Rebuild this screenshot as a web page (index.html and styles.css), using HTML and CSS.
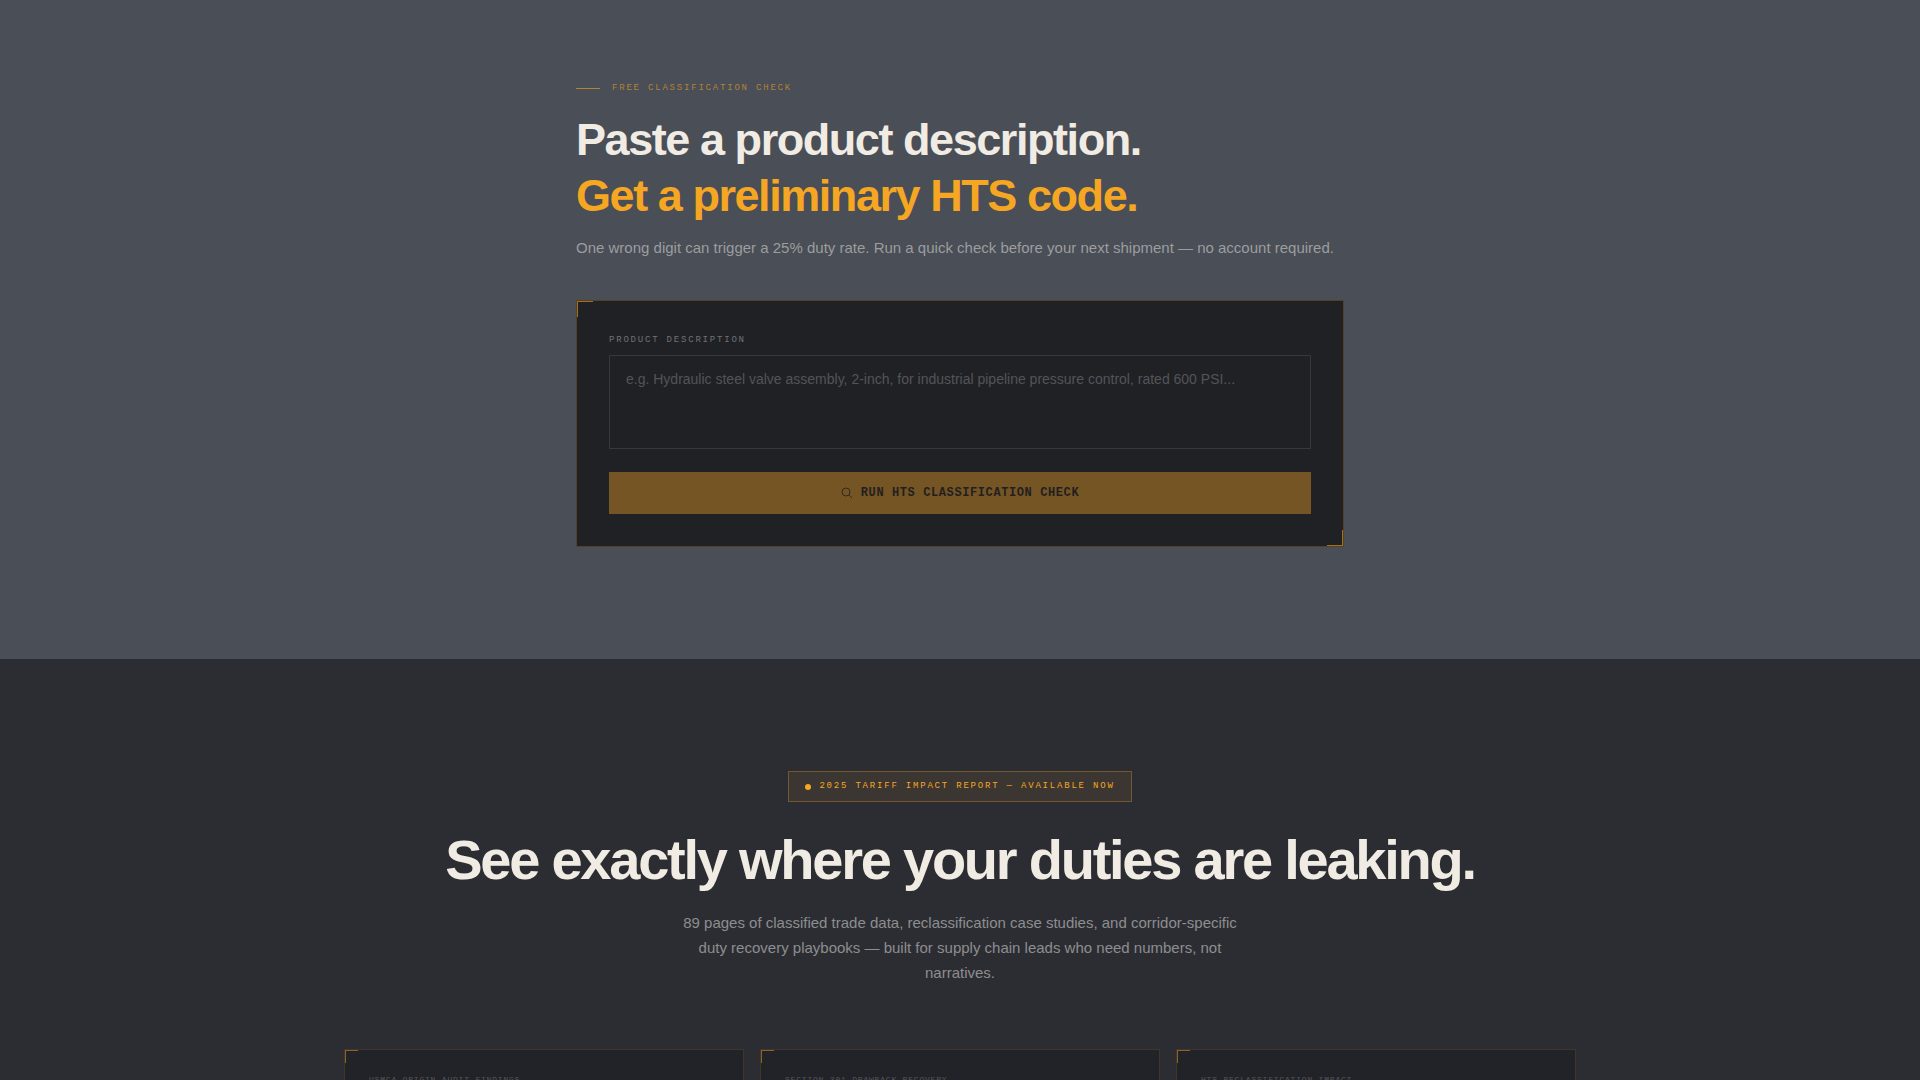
FILE: index.html
```html
<!DOCTYPE html>
<html lang="en">
<head>
<meta charset="utf-8">
<meta name="viewport" content="width=device-width, initial-scale=1">
<title>Free HTS Classification Check</title>
<link rel="stylesheet" href="styles.css">
</head>
<body>
<main>
  <section class="check">
    <div class="check-inner">
      <p class="eyebrow">Free Classification Check</p>
      <h1 class="check-title">Paste a product description.<br><span class="accent">Get a preliminary HTS code.</span></h1>
      <p class="check-lead">One wrong digit can trigger a 25% duty rate. Run a quick check before your next shipment — no account required.</p>
      <form class="panel">
        <label class="field-label" for="description">Product Description</label>
        <textarea class="field" id="description" placeholder="e.g. Hydraulic steel valve assembly, 2-inch, for industrial pipeline pressure control, rated 600 PSI..."></textarea>
        <button class="submit" type="button" disabled>
          <svg class="submit-icon" viewBox="0 0 12 12" fill="none" stroke="currentColor" stroke-width="1" aria-hidden="true"><circle cx="5" cy="5" r="4"/><path d="M8 8l3 3"/></svg>
          Run HTS Classification Check
        </button>
      </form>
    </div>
  </section>
  <section class="report">
    <div class="report-inner">
      <p class="badge"><span class="badge-dot"></span>2025 Tariff Impact Report — Available Now</p>
      <h2 class="report-title">See exactly where your duties are leaking.</h2>
      <p class="report-lead">89 pages of classified trade data, reclassification case studies, and corridor-specific duty recovery playbooks — built for supply chain leads who need numbers, not narratives.</p>
      <div class="cards">
        <article class="card"><h3 class="card-label">USMCA Origin Audit Findings</h3></article>
        <article class="card"><h3 class="card-label">Section 301 Drawback Recovery</h3></article>
        <article class="card"><h3 class="card-label">HTS Reclassification Impact</h3></article>
      </div>
    </div>
  </section>
</main>
</body>
</html>
```
FILE: styles.css
```css
:root {
  --amber: #f5a623;
  --cream: #f0ebe3;
  --sans: "Liberation Sans", Arial, sans-serif;
  --mono: "Liberation Mono", "Courier New", monospace;
}

* { box-sizing: border-box; margin: 0; }

body {
  background: #2c2d32;
  color: var(--cream);
  font-family: var(--sans);
}

.check {
  padding: 80px 24px 112px;
  background: #4a4e56;
}

.check-inner {
  max-width: 768px;
  margin: 0 auto;
}

.eyebrow {
  display: flex;
  align-items: center;
  gap: 12px;
  margin-bottom: 16px;
  color: rgba(245, 166, 35, 0.6);
  font: 9px/16px var(--mono);
  letter-spacing: 0.2em;
  text-transform: uppercase;
}

.eyebrow::before {
  content: "";
  width: 24px;
  height: 1px;
  background: currentColor;
}

.check-title {
  margin-bottom: 12px;
  font-size: 45px;
  line-height: 56px;
  letter-spacing: -0.032em;
}

.accent { color: var(--amber); }

.check-lead {
  margin-bottom: 40px;
  color: #9c9d9f;
  font-size: 15px;
  line-height: 24px;
}

.panel,
.card {
  position: relative;
  border: 1px solid rgba(245, 166, 35, 0.25);
}

.panel {
  display: flex;
  flex-direction: column;
  padding: 32px;
  background: #202125;
}

.panel::before,
.panel::after,
.card::before {
  content: "";
  position: absolute;
  width: 15px;
  height: 15px;
  border: 0 solid rgba(245, 166, 35, 0.6);
}

.panel::before,
.card::before {
  top: 0;
  left: 0;
  border-width: 1px 0 0 1px;
}

.panel::after {
  right: 0;
  bottom: 0;
  border-width: 0 1px 1px 0;
}

.field-label {
  margin-bottom: 8px;
  color: #717275;
  font: 9px/14px var(--mono);
  letter-spacing: 0.2em;
  text-transform: uppercase;
}

.field {
  height: 94px;
  margin-bottom: 23px;
  padding: 12px 16px;
  border: 1px solid #37383c;
  border-radius: 0;
  background: transparent;
  color: var(--cream);
  font: 14px/23px var(--sans);
  resize: none;
}

.field::placeholder { color: #535458; }

.submit {
  display: flex;
  align-items: center;
  justify-content: center;
  gap: 8px;
  padding: 14px 24px;
  border: 0;
  background: #765524;
  color: #221f20;
  font: bold 12px/14px var(--mono);
  letter-spacing: 0.05em;
  text-transform: uppercase;
}

.submit-icon {
  width: 12px;
  height: 12px;
  opacity: 0.8;
}

.report {
  padding: 112px 24px;
  background: #2c2d32;
}

.report-inner {
  display: flex;
  flex-direction: column;
  align-items: center;
  max-width: 1232px;
  margin: 0 auto;
}

.badge {
  display: flex;
  align-items: center;
  gap: 8px;
  margin-bottom: 28px;
  padding: 8px 16px;
  border: 1px solid rgba(245, 166, 35, 0.3);
  background: rgba(245, 166, 35, 0.08);
  color: var(--amber);
  font: 9px/13px var(--mono);
  letter-spacing: 0.2em;
  text-transform: uppercase;
}

.badge-dot {
  width: 6px;
  height: 6px;
  border-radius: 50%;
  background: var(--amber);
}

.report-title {
  margin-bottom: 20px;
  font-size: 56px;
  line-height: 60px;
  letter-spacing: -0.04em;
  text-align: center;
}

.report-lead {
  max-width: 560px;
  margin-bottom: 64px;
  color: #8d8e90;
  font-size: 15px;
  line-height: 25px;
  text-align: center;
}

.cards {
  display: grid;
  grid-template-columns: repeat(3, 1fr);
  gap: 16px;
  width: 100%;
}

.card {
  min-height: 160px;
  padding: 24px;
  border-color: rgba(245, 166, 35, 0.15);
  background: #222328;
}

.card::before {
  width: 12px;
  height: 12px;
  border-color: rgba(245, 166, 35, 0.5);
}

.card-label {
  color: #55565a;
  font: 8px/12px var(--mono);
  letter-spacing: 0.1em;
  text-transform: uppercase;
}
```
